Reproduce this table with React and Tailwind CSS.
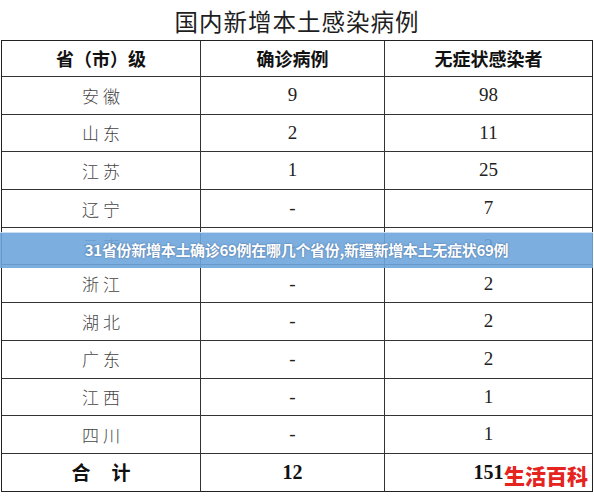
import React from "react";

const rows = [
  ["安徽", "9", "98"],
  ["山东", "2", "11"],
  ["江苏", "1", "25"],
  ["辽宁", "-", "7"],
  ["云南", "-", "2"],
  ["浙江", "-", "2"],
  ["湖北", "-", "2"],
  ["广东", "-", "2"],
  ["江西", "-", "1"],
  ["四川", "-", "1"],
];

const cjk = "font-['Noto_Sans_CJK_SC',sans-serif]";
const serif = "font-['Liberation_Serif','Noto_Sans_CJK_SC',serif]";

export default function App() {
  return (
    <div className="relative w-[594px] h-[498px] bg-white overflow-hidden">
      <div className="h-[40px] flex items-center justify-center pt-[3px]">
        <span className={`${cjk} text-[23.5px] leading-none text-[#1e1e1e] tracking-[1px] font-normal`}>
          国内新增本土感染病例
        </span>
      </div>
      <div className="ml-[1px] w-[592px] border-[1.5px] border-[#222] grid grid-cols-[199px_184px_1fr] grid-rows-[36px_repeat(10,37.7px)_37px]">
        <div className={`${cjk} border-r-[1.5px] border-b border-[#333] flex items-center justify-center text-[18px] font-bold text-[#111]`}>
          省（市）级
        </div>
        <div className={`${cjk} border-r-[1.5px] border-b border-[#333] flex items-center justify-center text-[18px] font-bold text-[#111]`}>
          确诊病例
        </div>
        <div className={`${cjk} border-b border-[#333] flex items-center justify-center text-[18px] font-bold text-[#111]`}>
          无症状感染者
        </div>
        {rows.map((r) => (
          <React.Fragment key={r[0]}>
            <div className={`${cjk} border-r-[1.5px] border-b border-[#333] flex items-center justify-center text-[17px] font-light text-[#444] tracking-[4px] pl-[4px]`}>
              {r[0]}
            </div>
            <div className={`${serif} border-r-[1.5px] border-b border-[#333] flex items-center justify-center text-[19px] text-[#222]`}>
              {r[1]}
            </div>
            <div className={`${serif} border-b border-[#333] flex items-center justify-center text-[19px] text-[#222]`}>
              {r[2]}
            </div>
          </React.Fragment>
        ))}
        <div className={`${cjk} border-r-[1.5px] border-[#333] flex items-center justify-center gap-[21px] text-[19px] font-bold text-[#111]`}>
          <span>合</span>
          <span>计</span>
        </div>
        <div className={`${serif} border-r-[1.5px] border-[#333] flex items-center justify-center text-[20px] font-bold text-[#111]`}>
          12
        </div>
        <div className={`${serif} flex items-center justify-center text-[20px] font-bold text-[#111]`}>
          151
        </div>
      </div>

      <div className="absolute left-0 top-[232px] w-[593px] h-[36px] bg-[#6ea6dc]/90 border-t border-[#c9def2] flex items-center justify-center">
        <span className={`${cjk} text-[15px] font-bold text-white tracking-[-0.3px] [text-shadow:0_0_2px_rgba(40,70,120,0.7)]`}>
          31省份新增本土确诊69例在哪几个省份,新疆新增本土无症状69例
        </span>
      </div>

      <div className={`${cjk} absolute left-[504px] top-[465px] text-[21px] leading-none font-black text-[#e5231f]`}>
        生活百科
      </div>
    </div>
  );
}
